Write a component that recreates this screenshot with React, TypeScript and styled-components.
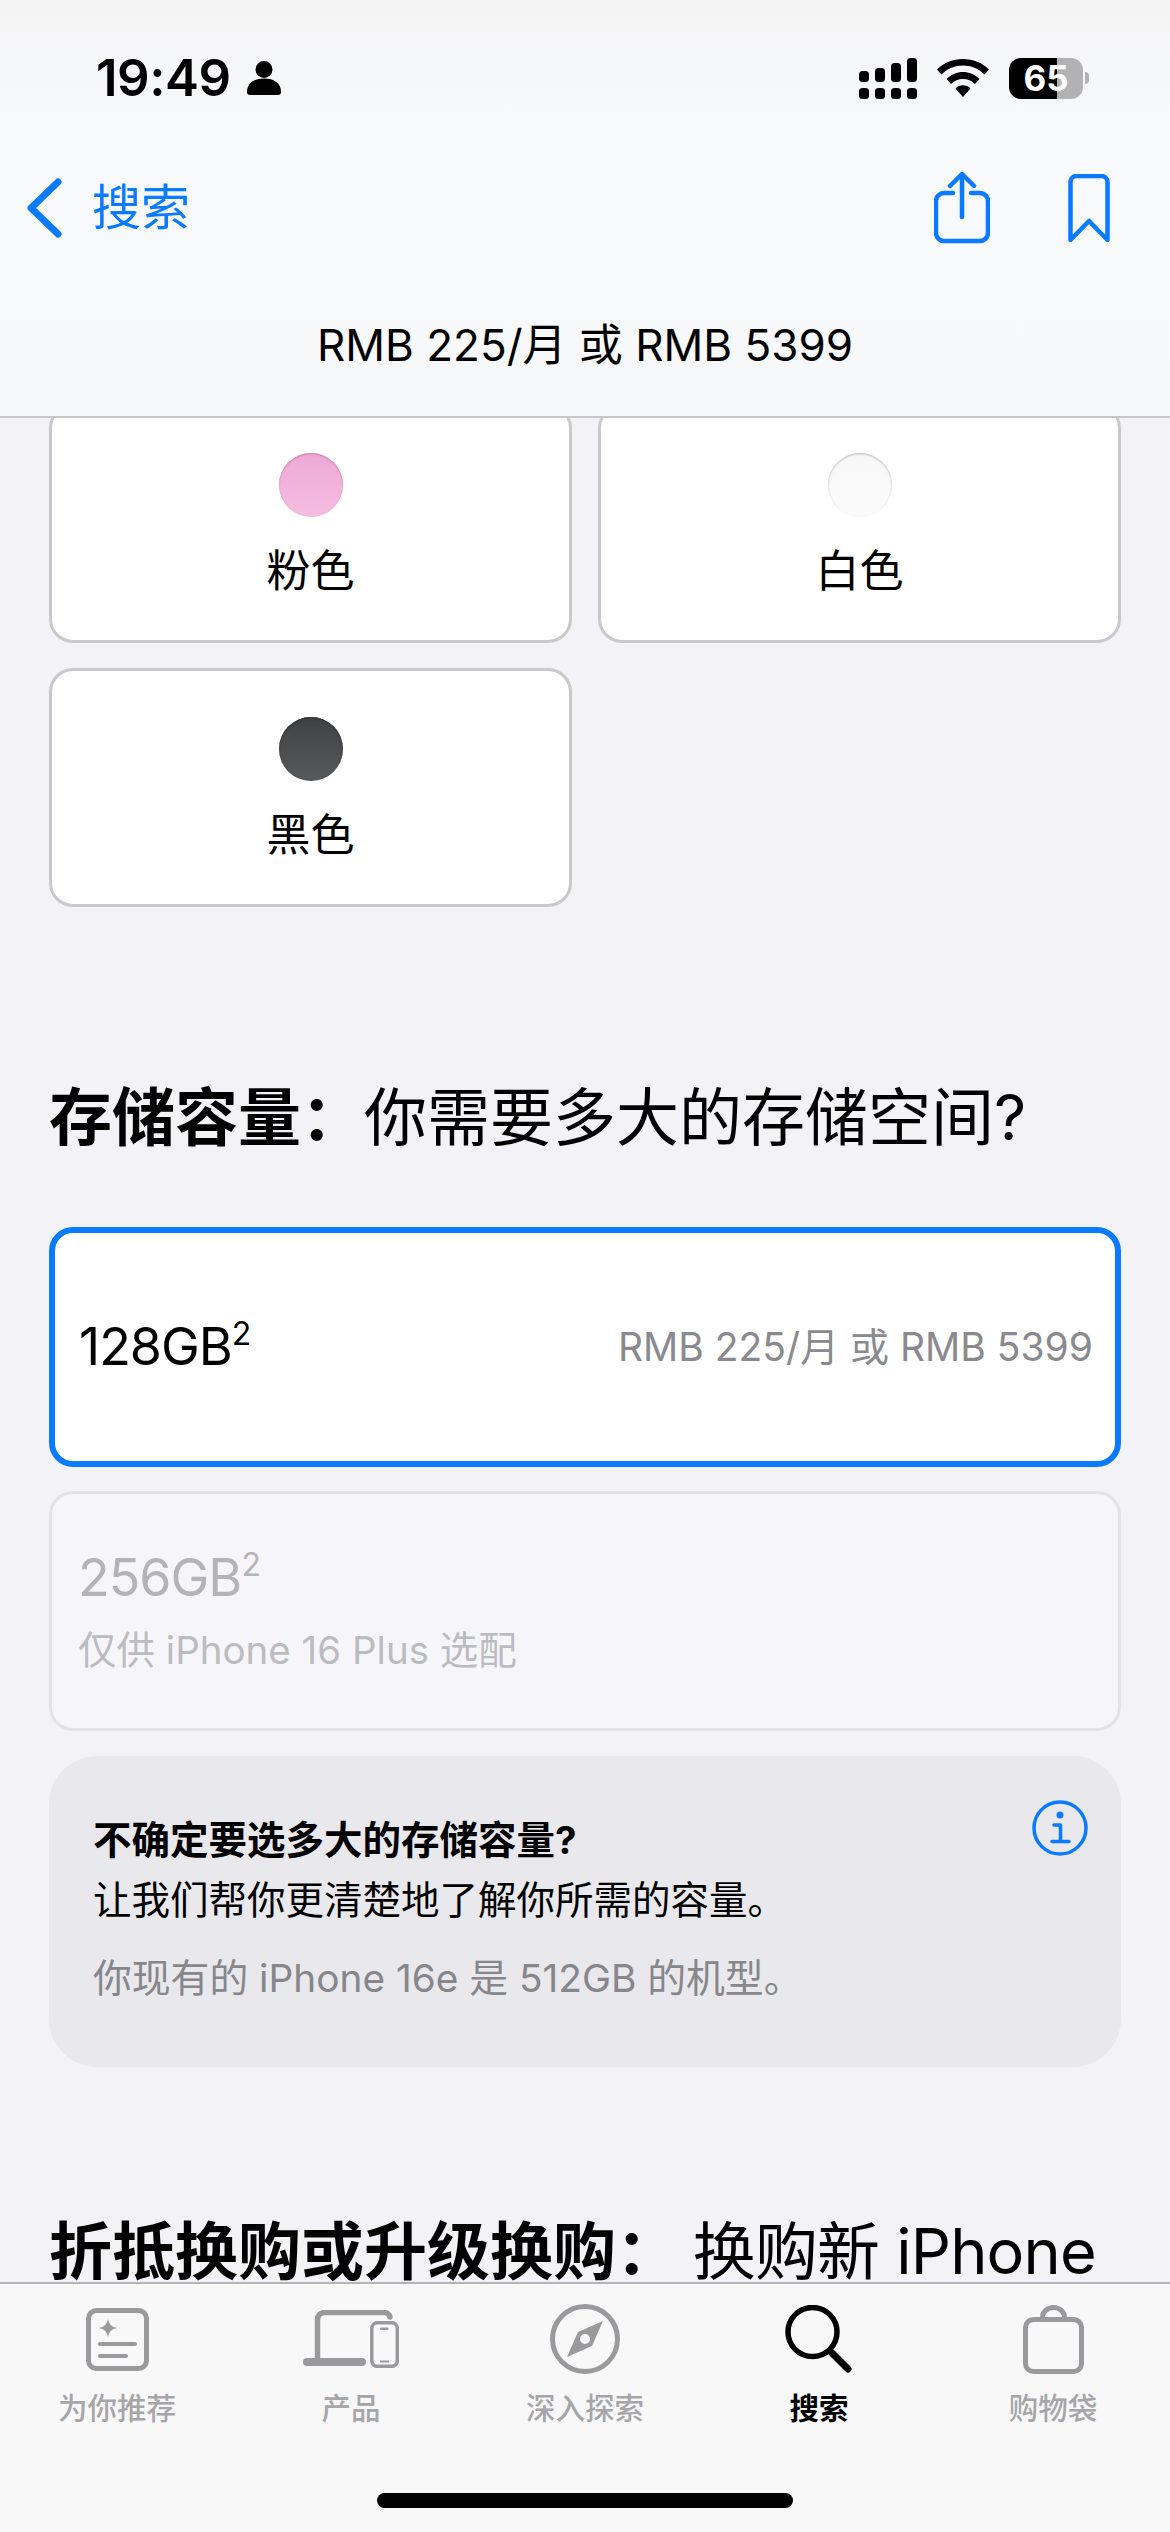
import React from "react";
import styled, { createGlobalStyle } from "styled-components";

const Global = createGlobalStyle`
  html, body { margin: 0; padding: 0; background: #f2f2f7; }
  body { font-family: Inter, "Noto Sans CJK SC", sans-serif; color: #000; }
  #root { width: 1170px; }
  * { box-sizing: border-box; }
`;

const Screen = styled.div`
  width: 1170px;
  height: 2532px;
  display: flex;
  flex-direction: column;
  overflow: hidden;
  background: #f2f2f7;
`;

const Header = styled.header`
  height: 418px;
  flex: none;
  display: flex;
  flex-direction: column;
  background: linear-gradient(180deg, #f4f4f5 0%, #f8f9fb 30%, #f7f8fa 100%);
  border-bottom: 2px solid #c6c6cb;
  position: relative;
  z-index: 2;
`;

const StatusBar = styled.div`
  height: 168px;
  flex: none;
  display: flex;
  justify-content: space-between;
  align-items: flex-start;
  padding: 55px 81px 0 96px;
`;

const StatusLeft = styled.div`
  display: flex;
  align-items: center;
  gap: 15px;
`;

const Time = styled.span`
  font-size: 51px;
  line-height: 46px;
  font-weight: 600;
  letter-spacing: -0.5px;
`;

const StatusRight = styled.div`
  display: flex;
  align-items: center;
  gap: 20px;
  height: 46px;
`;

const Battery = styled.div`
  display: flex;
  align-items: center;
  gap: 2px;
`;

const BatteryBody = styled.div`
  width: 74px;
  height: 41px;
  border-radius: 12px;
  background: linear-gradient(90deg, #000 0 65%, #b2b2b4 65% 100%);
  color: #fff;
  font-size: 35px;
  font-weight: 700;
  line-height: 41px;
  text-align: center;
`;

const BatteryCap = styled.div`
  width: 4px;
  height: 12px;
  border-radius: 0 4px 4px 0;
  background: #b2b2b4;
`;

const NavBar = styled.nav`
  height: 80px;
  flex: none;
  display: flex;
  align-items: center;
  justify-content: space-between;
  padding: 0 60px 0 26px;
`;

const BackLink = styled.div`
  display: flex;
  align-items: center;
  gap: 30px;
  color: #0a7aff;
  font-size: 49px;
  line-height: 60px;
`;

const NavActions = styled.div`
  display: flex;
  align-items: center;
  gap: 78px;
`;

const PriceLine = styled.div`
  flex: 1;
  display: flex;
  align-items: flex-start;
  justify-content: center;
  padding-top: 71px;
  font-size: 44px;
  line-height: 52px;
`;

const Main = styled.main`
  flex: 1;
  min-height: 0;
  overflow: hidden;
  padding: 0 49px;
`;

const ColourGrid = styled.div`
  display: grid;
  grid-template-columns: 523px 523px;
  gap: 25px 26px;
  margin-top: -14px;
`;

const ColourCard = styled.div`
  height: 239px;
  border: 3px solid #c8c8cd;
  border-radius: 24px;
  background: #fff;
  display: flex;
  flex-direction: column;
  align-items: center;
  padding-top: 46px;
`;

const Swatch = styled.div<{ $from: string; $to: string; $edge: string }>`
  width: 64px;
  height: 64px;
  border-radius: 50%;
  background: linear-gradient(180deg, ${(p) => p.$from}, ${(p) => p.$to});
  box-shadow: inset 0 1px 2px ${(p) => p.$edge};
`;

const ColourName = styled.div`
  margin-top: 28px;
  font-size: 44px;
  line-height: 52px;
`;

const SectionTitle = styled.h2<{ $top: number }>`
  margin: ${(p) => p.$top}px 0 0;
  font-size: 63px;
  line-height: 76px;
  font-weight: 400;
  white-space: pre;
`;

const Strong = styled.span`
  font-weight: 700;
`;

const TitleTail = styled.span`
  letter-spacing: -0.8px;
  margin-left: -4px;
`;

const StorageCard = styled.div<{ $selected?: boolean; $disabled?: boolean }>`
  height: 240px;
  border-radius: 24px;
  border: ${(p) =>
    p.$selected ? "6px solid #0a7aff" : "3px solid #e3e3e7"};
  background: ${(p) => (p.$disabled ? "#f6f6fa" : "#fff")};
  padding: 0 ${(p) => (p.$selected ? 22 : 27)}px 0 ${(p) => (p.$selected ? 24 : 26)}px;
  display: flex;
  align-items: center;
  justify-content: space-between;
  margin-top: ${(p) => (p.$selected ? 72 : 24)}px;
`;

const Capacity = styled.div<{ $muted?: boolean }>`
  font-size: 52px;
  line-height: 60px;
  letter-spacing: -1px;
  color: ${(p) => (p.$muted ? "#b4b4b8" : "#000")};
  sup {
    font-size: 32px;
    line-height: 0;
    vertical-align: 20px;
    letter-spacing: 0;
  }
`;

const StoragePrice = styled.div`
  font-size: 39px;
  line-height: 48px;
  color: #8a8a8e;
`;

const StorageStack = styled.div`
  display: flex;
  flex-direction: column;
  gap: 18px;
`;

const StorageNote = styled.div`
  font-size: 38.5px;
  line-height: 48px;
  color: #bcbcc0;
`;

const InfoBox = styled.div`
  height: 311px;
  margin-top: 25px;
  border-radius: 48px;
  background: #e8e8ed;
  padding: 44px 33px 0 44px;
  display: flex;
  justify-content: space-between;
  align-items: flex-start;
`;

const InfoText = styled.div`
  display: flex;
  flex-direction: column;
`;

const InfoLine = styled.div<{ $bold?: boolean; $muted?: boolean; $gap?: number }>`
  font-size: ${(p) => (p.$muted ? 38.8 : 38.5)}px;
  line-height: 50px;
  font-weight: ${(p) => (p.$bold ? 700 : 400)};
  color: ${(p) => (p.$muted ? "#86868b" : "#000")};
  margin-top: ${(p) => p.$gap ?? 0}px;
`;

const TabBar = styled.footer`
  height: 250px;
  flex: none;
  border-top: 2px solid #b4b4b8;
  background: #f8f8f9;
  display: flex;
  flex-direction: column;
  position: relative;
  z-index: 2;
`;

const Tabs = styled.div`
  display: grid;
  grid-template-columns: repeat(5, 1fr);
  height: 209px;
`;

const Tab = styled.div<{ $active?: boolean }>`
  display: flex;
  flex-direction: column;
  align-items: center;
  padding-top: 20px;
  color: ${(p) => (p.$active ? "#000" : "#a6a6a9")};
`;

const TabIcon = styled.div`
  height: 70px;
  display: flex;
  align-items: center;
  justify-content: center;
`;

const TabLabel = styled.div<{ $active?: boolean }>`
  margin-top: 16px;
  font-size: 29.5px;
  line-height: 36px;
  font-weight: ${(p) => (p.$active ? 600 : 500)};
`;

const HomeBar = styled.div`
  width: 416px;
  height: 15px;
  border-radius: 8px;
  background: #000;
  align-self: center;
`;

const PersonIcon = () => (
  <svg width="36" height="36" viewBox="0 0 36 36" fill="#000">
    <circle cx="18" cy="9.5" r="8.5" />
    <path d="M1 32c0-9 7-13.500 17-13.500S35 23 35 32c0 2-1 3-3 3H4c-2 0-3-1-3-3z" />
  </svg>
);

const SignalIcon = () => (
  <svg width="58" height="41" viewBox="0 0 58 41" fill="#000">
    <rect x="0" y="13" width="10" height="11" rx="3.500" />
    <rect x="16" y="10" width="10" height="14" rx="3.500" />
    <rect x="32" y="5" width="10" height="19" rx="3.500" />
    <rect x="48" y="0" width="10" height="24" rx="3.500" />
    <rect x="0" y="30" width="10" height="11" rx="3.500" />
    <rect x="16" y="30" width="10" height="11" rx="3.500" />
    <rect x="32" y="30" width="10" height="11" rx="3.500" />
    <rect x="48" y="30" width="10" height="11" rx="3.500" />
  </svg>
);

const WifiIcon = () => (
  <svg width="52" height="38" viewBox="0 0 52 38" fill="#000">
    <path d="M0 10.500C7 3.500 16 0 26 0s19 3.500 26 10.500l-4.500 5C41.500 9.500 34 6.500 26 6.500S10.500 9.500 4.500 15.500z" />
    <path d="M9.500 20c4.500-4.500 10.500-7 16.500-7s12 2.500 16.500 7L38 25c-3.200-3.200-7.500-5-12-5s-8.800 1.800-12 5z" />
    <path d="M18.500 29.500c2-2 4.700-3.200 7.500-3.200s5.500 1.200 7.500 3.200L26 38z" />
  </svg>
);

const ChevronIcon = () => (
  <svg width="36" height="60" viewBox="0 0 36 60" fill="none" stroke="#0a7aff" strokeWidth="7" strokeLinecap="round" strokeLinejoin="round">
    <path d="M32 4 5 30l27 26" />
  </svg>
);

const ShareIcon = () => (
  <svg width="56" height="72" viewBox="0 0 56 72" fill="none" stroke="#0a7aff" strokeWidth="4.500" strokeLinecap="round" strokeLinejoin="round">
    <path d="M19 21H10a8 8 0 0 0-8 8v32a8 8 0 0 0 8 8h36a8 8 0 0 0 8-8V29a8 8 0 0 0-8-8h-9" />
    <path d="M28 45V3" />
    <path d="M16 14 28 2l12 12" />
  </svg>
);

const BookmarkIcon = () => (
  <svg width="42" height="68" viewBox="0 0 42 68" fill="none" stroke="#0a7aff" strokeWidth="4.500" strokeLinecap="round" strokeLinejoin="round">
    <path d="M2.500 66V8a6 6 0 0 1 6-6h25a6 6 0 0 1 6 6v58L21 47z" />
  </svg>
);

const InfoIcon = () => (
  <svg width="56" height="56" viewBox="0 0 56 56" fill="none" stroke="#0a7aff">
    <circle cx="28" cy="28" r="26" strokeWidth="3.500" />
    <circle cx="28" cy="15" r="3.500" fill="#0a7aff" stroke="none" />
    <path d="M22 25h6.500v16M20 41.500h17" strokeWidth="3.500" strokeLinecap="round" strokeLinejoin="round" />
  </svg>
);

const ForYouIcon = () => (
  <svg width="63" height="63" viewBox="0 0 63 63" fill="none" stroke="#9a9a9d">
    <rect x="2.500" y="2.500" width="58" height="58" rx="8" strokeWidth="5" />
    <path d="M22 10.500c.8 5.700 3.500 8.700 9.500 9.500-6 .8-8.700 3.800-9.500 9.500-.8-5.700-3.500-8.700-9.500-9.500 6-.8 8.700-3.800 9.500-9.500z" fill="#9a9a9d" stroke="none" />
    <path d="M14 36h35M14 48h26" strokeWidth="4" strokeLinecap="round" />
  </svg>
);

const ProductsIcon = () => (
  <svg width="96" height="58" viewBox="0 0 96 58" fill="none">
    <path d="M14.500 50V9.500a7 7 0 0 1 7-7H81a6 6 0 0 1 6 4.500" stroke="#9a9a9d" strokeWidth="5.500" strokeLinecap="round" />
    <rect x="0" y="48" width="63" height="8" rx="4" fill="#9a9a9d" />
    <rect x="68.800" y="12.800" width="25.500" height="43.500" rx="5.500" stroke="#9a9a9d" strokeWidth="3.500" />
    <rect x="77" y="17.500" width="8.500" height="2.500" rx="1.250" fill="#9a9a9d" />
    <path d="M77 51.500h9" stroke="#9a9a9d" strokeWidth="2" />
  </svg>
);

const ExploreIcon = () => (
  <svg width="70" height="70" viewBox="0 0 70 70" fill="none">
    <circle cx="35" cy="35" r="32.500" stroke="#9a9a9d" strokeWidth="5" />
    <path fillRule="evenodd" clipRule="evenodd" d="M53 17 42 42 17 53 28 28zM35 30a5 5 0 1 0 0 10 5 5 0 0 0 0-10z" fill="#9a9a9d" />
  </svg>
);

const SearchIcon = () => (
  <svg width="68" height="68" viewBox="0 0 68 68" fill="none" stroke="#000" strokeLinecap="round">
    <circle cx="27.500" cy="27" r="24.500" strokeWidth="5.500" />
    <path d="M45 46 63 64" strokeWidth="7" />
  </svg>
);

const BagIcon = () => (
  <svg width="61" height="69" viewBox="0 0 61 69" fill="none" stroke="#9a9a9d" strokeWidth="5">
    <rect x="2.500" y="14.500" width="56" height="52" rx="8" />
    <path d="M19.500 14v-1.500a11 10 0 0 1 22 0V14" />
  </svg>
);

const tabs = [
  { label: "为你推荐", icon: <ForYouIcon /> },
  { label: "产品", icon: <ProductsIcon /> },
  { label: "深入探索", icon: <ExploreIcon /> },
  { label: "搜索", icon: <SearchIcon />, active: true },
  { label: "购物袋", icon: <BagIcon /> },
];

const colours = [
  { name: "粉色", from: "#efa9d6", to: "#f4bde0", edge: "#c97cb0" },
  { name: "白色", from: "#f7f7f7", to: "#fbfbfb", edge: "#b9b9b9" },
  { name: "黑色", from: "#3f4244", to: "#58595b", edge: "#2c2d2f" },
];

export default function App() {
  return (
    <Screen>
      <Global />
      <Header>
        <StatusBar>
          <StatusLeft>
            <Time>19:49</Time>
            <PersonIcon />
          </StatusLeft>
          <StatusRight>
            <SignalIcon />
            <WifiIcon />
            <Battery>
              <BatteryBody>65</BatteryBody>
              <BatteryCap />
            </Battery>
          </StatusRight>
        </StatusBar>
        <NavBar>
          <BackLink>
            <ChevronIcon />
            搜索
          </BackLink>
          <NavActions>
            <ShareIcon />
            <BookmarkIcon />
          </NavActions>
        </NavBar>
        <PriceLine>RMB 225/月 或 RMB 5399</PriceLine>
      </Header>
      <Main>
        <ColourGrid>
          {colours.map((c) => (
            <ColourCard key={c.name}>
              <Swatch $from={c.from} $to={c.to} $edge={c.edge} />
              <ColourName>{c.name}</ColourName>
            </ColourCard>
          ))}
        </ColourGrid>
        <SectionTitle $top={172}>
          <Strong>存储容量{"\uFF1A"}</Strong>你需要多大的存储空间?
        </SectionTitle>
        <StorageCard $selected>
          <Capacity>
            128GB<sup>2</sup>
          </Capacity>
          <StoragePrice>RMB 225/月 或 RMB 5399</StoragePrice>
        </StorageCard>
        <StorageCard $disabled>
          <StorageStack>
            <Capacity $muted>
              256GB<sup>2</sup>
            </Capacity>
            <StorageNote>仅供 iPhone 16 Plus 选配</StorageNote>
          </StorageStack>
        </StorageCard>
        <InfoBox>
          <InfoText>
            <InfoLine $bold $gap={15}>不确定要选多大的存储容量?</InfoLine>
            <InfoLine $gap={10}>让我们帮你更清楚地了解你所需的容量。</InfoLine>
            <InfoLine $muted $gap={28}>你现有的 iPhone 16e 是 512GB 的机型。</InfoLine>
          </InfoText>
          <InfoIcon />
        </InfoBox>
        <SectionTitle $top={146}>
          <Strong>折抵换购或升级换购{"\uFF1A"}</Strong> <TitleTail>换购新 iPhone</TitleTail>
        </SectionTitle>
      </Main>
      <TabBar>
        <Tabs>
          {tabs.map((t) => (
            <Tab key={t.label} $active={t.active}>
              <TabIcon>{t.icon}</TabIcon>
              <TabLabel $active={t.active}>{t.label}</TabLabel>
            </Tab>
          ))}
        </Tabs>
        <HomeBar />
      </TabBar>
    </Screen>
  );
}
